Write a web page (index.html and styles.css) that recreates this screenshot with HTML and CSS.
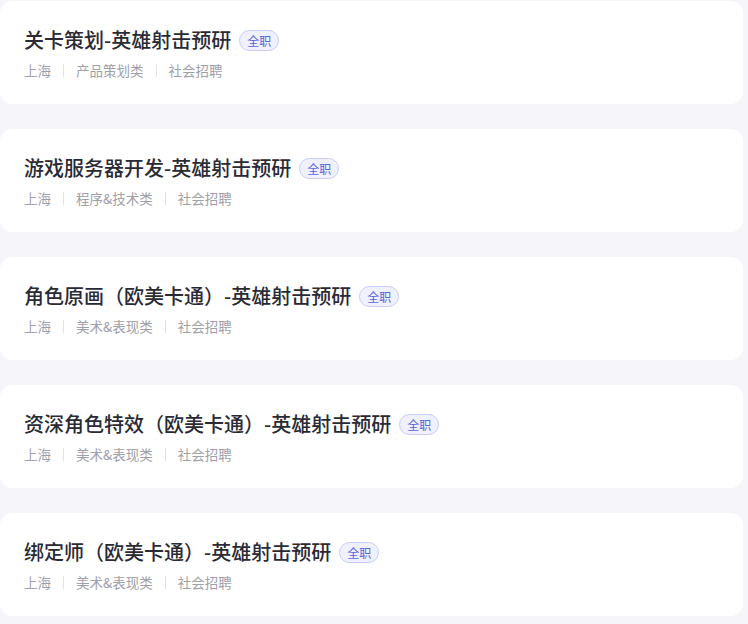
FILE: index.html
```html
<!DOCTYPE html>
<html lang="zh-CN">
<head>
<meta charset="utf-8">
<link rel="stylesheet" href="styles.css">
</head>
<body>
<div class="list">
  <div class="card">
    <div class="title-row"><span class="title">关卡策划-英雄射击预研</span><span class="badge">全职</span></div>
    <div class="meta"><span>上海</span><i class="sep"></i><span>产品策划类</span><i class="sep"></i><span>社会招聘</span></div>
  </div>
  <div class="card">
    <div class="title-row"><span class="title">游戏服务器开发-英雄射击预研</span><span class="badge">全职</span></div>
    <div class="meta"><span>上海</span><i class="sep"></i><span>程序&amp;技术类</span><i class="sep"></i><span>社会招聘</span></div>
  </div>
  <div class="card">
    <div class="title-row"><span class="title">角色原画（欧美卡通）-英雄射击预研</span><span class="badge">全职</span></div>
    <div class="meta"><span>上海</span><i class="sep"></i><span>美术&amp;表现类</span><i class="sep"></i><span>社会招聘</span></div>
  </div>
  <div class="card">
    <div class="title-row"><span class="title">资深角色特效（欧美卡通）-英雄射击预研</span><span class="badge">全职</span></div>
    <div class="meta"><span>上海</span><i class="sep"></i><span>美术&amp;表现类</span><i class="sep"></i><span>社会招聘</span></div>
  </div>
  <div class="card">
    <div class="title-row"><span class="title">绑定师（欧美卡通）-英雄射击预研</span><span class="badge">全职</span></div>
    <div class="meta"><span>上海</span><i class="sep"></i><span>美术&amp;表现类</span><i class="sep"></i><span>社会招聘</span></div>
  </div>
</div>
</body>
</html>
```
FILE: styles.css
```css
html, body {
  margin: 0;
  padding: 0;
  background: #f5f5fa;
  font-family: "Noto Sans CJK SC", "Noto Sans", sans-serif;
}
.list {
  display: flex;
  flex-direction: column;
  gap: 25px;
  padding: 1px 5px 0 0;
  width: 743px;
}
.card {
  background: #ffffff;
  border-radius: 12px;
  height: 103px;
  box-sizing: border-box;
  padding: 25px 24px 0 24px;
}
.title-row {
  display: flex;
  align-items: center;
  height: 28px;
}
.title {
  font-size: 20px;
  line-height: 28px;
  color: #2a2a35;
  font-weight: 500;
}
.badge {
  margin-left: 8px;
  height: 19px;
  padding: 0 7px;
  border: 1px solid #c6ccf7;
  background: #eff1ff;
  color: #5a66dc;
  border-radius: 11px;
  font-size: 12px;
  line-height: 19px;
  display: inline-flex;
  align-items: center;
}
.meta {
  margin-top: 6px;
  display: flex;
  align-items: center;
  height: 20px;
  font-size: 13.5px;
  color: #a0a0aa;
}
.sep {
  display: inline-block;
  width: 1px;
  height: 13px;
  background: #e2e2e8;
  margin: 0 12px;
}
```
